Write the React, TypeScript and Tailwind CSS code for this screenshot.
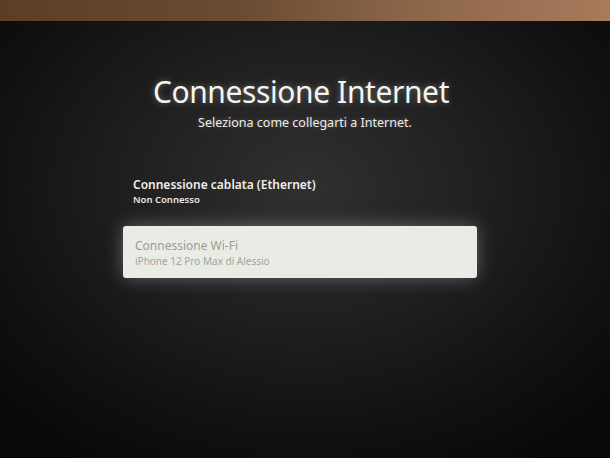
export default function App() {
  return (
    <div className="w-[610px] h-[458px] flex flex-col overflow-hidden bg-black" style={{ fontFamily: '"Noto Sans", "Open Sans", sans-serif' }}>
      <div className="h-[21px] shrink-0 bg-[linear-gradient(90deg,#5a3e28_0%,#6a4c34_40%,#8a6448_65%,#a87a5c_100%)]" />
      <div className="flex-1 flex flex-col items-center bg-[radial-gradient(ellipse_70%_75%_at_50%_38%,#303030_0%,#202020_40%,#111111_75%,#080808_100%)]">
        <h1 className="mt-[52px] mr-[8px] text-[30px] leading-[38px] text-[#f4f4f0] tracking-[-0.4px] [text-shadow:0_0_6px_rgba(255,255,255,0.35)]">
          Connessione Internet
        </h1>
        <p className="mt-[4px] text-[12.5px] leading-[16px] text-[#ececea] [text-shadow:0_0_4px_rgba(255,255,255,0.25)]">
          Seleziona come collegarti a Internet.
        </p>
        <div className="mt-[46px] mr-[10px] w-[354px] flex flex-col">
          <div className="px-[10px]">
            <div className="text-[12px] leading-[16px] font-semibold text-[#f0f0ee]">Connessione cablata (Ethernet)</div>
            <div className="text-[9.5px] leading-[13px] font-semibold text-[#e8e8e6]">Non Connesso</div>
          </div>
          <div className="mt-[20px] h-[52px] rounded-[3px] bg-[#e9ece4] shadow-[0_0_18px_rgba(255,255,255,0.3)] px-[12px] pt-[12px]">
            <div className="text-[12px] leading-[16px] text-[#9a9c98]">Connessione Wi-Fi</div>
            <div className="mt-[1px] text-[10px] leading-[13px] text-[#a2a4a0]">iPhone 12 Pro Max di Alessio</div>
          </div>
        </div>
      </div>
    </div>
  );
}
